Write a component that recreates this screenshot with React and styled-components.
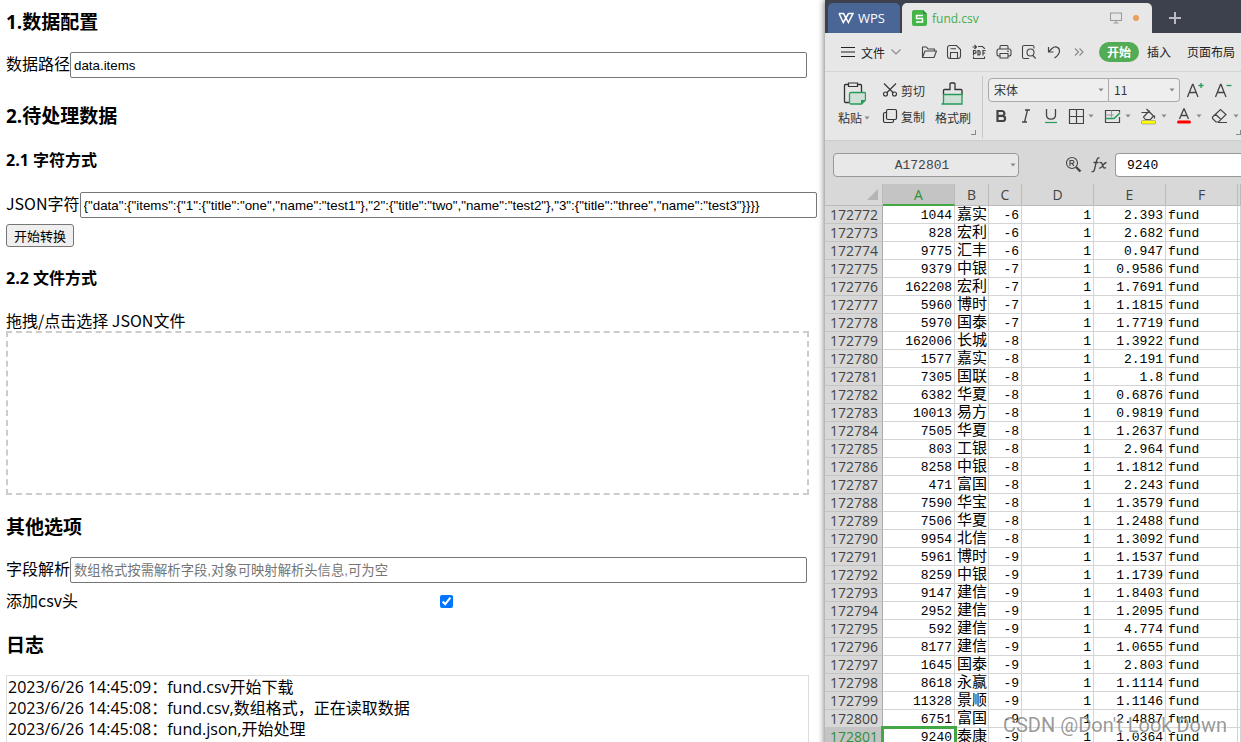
import styled, { createGlobalStyle } from 'styled-components';

const GlobalStyle = createGlobalStyle`
    * {
        box-sizing: border-box;
    }
    body {
        margin: 0;
        background: #fff;
        color: #000;
        font-family: "Noto Sans CJK SC", "Open Sans", sans-serif;
    }
    button, select {
        font: inherit;
        color: inherit;
    }
`;

const Page = styled.div`
    display: grid;
    grid-template-columns: minmax(0, 1fr) 416px;
    height: 100vh;
    overflow: hidden;
`;

/* ---------- converter form ---------- */

const Converter = styled.main`
    display: flex;
    flex-direction: column;
    align-items: flex-start;
    padding: 10px 0 0 6px;
    font-size: 16px;
    line-height: 21px;
    min-width: 0;
`;

const Section = styled.h3`
    margin: ${({ $first }) => ($first ? '0' : '20px')} 0 17px;
    font-family: "Open Sans", "Noto Sans CJK SC", sans-serif;
    font-size: 19px;
    line-height: 25px;
    font-weight: 700;
`;

const SubSection = styled.h4`
    margin: 21px 0;
    font-family: "Open Sans", "Noto Sans CJK SC", sans-serif;
    font-size: 16px;
    line-height: 21px;
    font-weight: 700;

    ${Section} + & {
        margin-top: 4px;
    }
`;

const Field = styled.div`
    display: flex;
    align-items: flex-start;
    width: 100%;
    height: ${({ $short }) => ($short ? '24px' : '26px')};
    margin-bottom: ${({ $short }) => ($short ? '0' : '6px')};
    line-height: 23px;
    white-space: nowrap;
`;

const TextInput = styled.input`
    flex: none;
    width: 90%;
    height: 26px;
    padding: 1px 3px;
    border: 1px solid #767676;
    border-radius: 2px;
    background: #fff;
    font-family: "Liberation Sans", "Noto Sans CJK SC", sans-serif;

    &::placeholder {
        color: #757575;
    }
`;

const CheckInput = styled.input`
    flex: none;
    align-self: center;
    width: 90%;
    height: 13px;
    margin: 0;
    accent-color: #0075ff;
`;

const ConvertButton = styled.button`
    height: 23px;
    padding: 0 7px;
    border: 1px solid #767676;
    border-radius: 3px;
    background: #efefef;
    font-size: 13px;
    line-height: 20px;
`;

const DropZone = styled.div`
    width: 98%;
    height: 164px;
    border: 2px dashed #ccc;
`;

const FileInput = styled.input`
    display: block;
    width: 100%;
    height: 100%;
    opacity: 0;
`;

const Log = styled.div`
    width: 98%;
    min-height: 200px;
    padding: 1px;
    border: 1px solid #ddd;
    font-family: "Open Sans", "Noto Sans CJK SC", sans-serif;
`;

/* ---------- spreadsheet window ---------- */

const Window = styled.section`
    display: flex;
    flex-direction: column;
    background: #d8d8d8;
    box-shadow: -1px 0 6px rgba(0, 0, 0, 0.5);
    font-size: 12px;
    color: #333;
    min-width: 0;
`;

const TitleBar = styled.header`
    display: flex;
    flex: none;
    gap: 2px;
    height: 33px;
    padding: 3px 0 0 3px;
    background: #3d404d;
`;

const AppTab = styled.button`
    display: flex;
    align-items: center;
    gap: 4px;
    width: 72px;
    padding: 0 0 0 10px;
    border: 0;
    border-radius: 5px 5px 0 0;
    background: #4a6697;
    color: #fff;
    font-family: "Open Sans", sans-serif;
    font-size: 13px;
`;

const FileTab = styled.div`
    display: flex;
    align-items: center;
    gap: 5px;
    width: 250px;
    padding: 0 13px 0 10px;
    border-radius: 5px 5px 0 0;
    background: #e7e7e7;
    color: #3fae49;
    font-family: "Open Sans", sans-serif;
    font-size: 12px;
`;

const FileName = styled.span`
    flex: 1;
`;

const UnsavedDot = styled.span`
    width: 6px;
    height: 6px;
    margin-left: 6px;
    border-radius: 50%;
    background: #e8a05a;
`;

const IconButton = styled.button`
    display: flex;
    flex: none;
    align-items: center;
    justify-content: center;
    gap: 4px;
    width: ${({ $width }) => $width || 25}px;
    height: 24px;
    padding: 0;
    border: 0;
    background: none;
    color: #444;
`;

const NewTab = styled(IconButton)`
    height: 30px;
    color: #b9bbc2;
`;

const MenuBar = styled.nav`
    display: flex;
    flex: none;
    align-items: center;
    height: 39px;
    padding-left: 16px;
    border-bottom: 1px solid #d4d4d4;
    background: #e7e7e7;
    overflow: hidden;
`;

const MenuButton = styled.button`
    display: flex;
    flex: none;
    align-items: center;
    gap: 6px;
    padding: 0;
    border: 0;
    background: none;
    color: #222;
    white-space: nowrap;
`;

const MenuDivider = styled.span`
    width: 1px;
    height: 24px;
    margin: 0 5px 0 10px;
    background: #bbb;
`;

const MenuTabs = styled.div`
    display: flex;
    flex: none;
    align-items: center;
    gap: 8px;
    margin-left: 8px;
`;

const MenuTab = styled.button`
    height: 20px;
    padding: 0 8px;
    border: 0;
    border-radius: 10px;
    background: ${({ $active }) => ($active ? '#52ab55' : 'none')};
    color: ${({ $active }) => ($active ? '#fff' : '#222')};
    font-weight: ${({ $active }) => ($active ? 700 : 400)};
    line-height: 20px;
    white-space: nowrap;

    & + & {
        padding: 0 8px 0 0;
    }
`;

const Ribbon = styled.div`
    display: flex;
    flex: none;
    height: 69px;
    background: #e7e7e7;
    border-bottom: 1px solid #ccc;
    overflow: hidden;
`;

const Clipboard = styled.div`
    display: flex;
    flex: none;
    align-items: flex-start;
    width: 158px;
    margin: 4px 0 2px;
    padding: 5px 0 0 13px;
    border-right: 1px solid #c8c8c8;
`;

const BigTool = styled.button`
    display: flex;
    flex-direction: column;
    align-items: center;
    gap: 4px;
    padding: 0;
    border: 0;
    background: none;
    color: #333;
    line-height: 18px;
    white-space: nowrap;
`;

const ToolLabel = styled.span`
    display: flex;
    align-items: center;
    gap: 2px;
`;

const SmallTools = styled.div`
    display: flex;
    flex-direction: column;
    gap: 8px;
    margin: 0 10px 0 12px;
`;

const SmallTool = styled.button`
    display: flex;
    align-items: center;
    gap: 3px;
    height: 18px;
    padding: 0;
    border: 0;
    background: none;
    color: #333;
    white-space: nowrap;
`;

const Corner = styled.span`
    flex: none;
    align-self: flex-end;
    width: 5px;
    height: 5px;
    margin-bottom: 3px;
    border: solid #888;
    border-width: 0 1px 1px 0;
`;

const FontTools = styled.div`
    display: flex;
    flex: 1;
    flex-direction: column;
    gap: 2px;
    min-width: 0;
    padding: 6px 0 0 5px;
`;

const ToolRow = styled.div`
    display: flex;
    align-items: center;
`;

const Picker = styled.label`
    display: flex;
    flex: none;
    align-items: center;
    width: ${({ $width }) => $width}px;
    height: 24px;
    padding: 0 4px 0 3px;
    border: 1px solid #aaa;
    border-radius: ${({ $last }) => ($last ? '0 4px 4px 0' : '4px 0 0 4px')};
    background: #eee;

    & + & {
        border-left: 0;
    }
`;

const PickerSelect = styled.select`
    flex: 1;
    min-width: 0;
    border: 0;
    padding: 0 0 0 2px;
    appearance: none;
    background: none;
    line-height: 20px;
`;

const FormulaBar = styled.div`
    display: flex;
    flex: none;
    align-items: center;
    height: 43px;
    padding: 4px 0 0 8px;
`;

const NameBox = styled.label`
    display: flex;
    align-items: center;
    width: 186px;
    height: 24px;
    margin-right: 40px;
    padding-right: 2px;
    border: 1px solid #999;
    border-radius: 4px;
    background: #e8e8e8;
`;

const NameInput = styled.input`
    flex: 1;
    min-width: 0;
    border: 0;
    padding: 2px 0 0;
    background: none;
    color: #444;
    text-align: center;
    font-family: "Liberation Mono", monospace;
    font-size: 13px;
`;

const FormulaInput = styled.input`
    flex: 1;
    min-width: 0;
    height: 24px;
    margin-left: 4px;
    padding: 2px 11px 0;
    border: 1px solid #999;
    border-right: 0;
    border-radius: 4px 0 0 4px;
    background: #fff;
    color: #000;
    font-family: "Liberation Mono", monospace;
    font-size: 13px;
`;

const Sheet = styled.table`
    width: 100%;
    table-layout: fixed;
    border-collapse: separate;
    border-spacing: 0;
    background: #fff;
    color: #000;
`;

const Col = styled.col`
    width: ${({ $width }) => $width};
`;

const ColumnHead = styled.th`
    height: 22px;
    padding: 0;
    border-right: 1px solid #bbb;
    border-bottom: ${({ $active }) => ($active ? '2px solid #43a843' : '1px solid #bbb')};
    background: ${({ $active }) => ($active ? '#c4c4c4' : '#d8d8d8')};
    color: ${({ $active }) => ($active ? '#2f8f3a' : '#444')};
    font-family: "Open Sans", sans-serif;
    font-size: 14px;
    font-weight: 400;
    line-height: 19px;
`;

const SelectAll = styled(ColumnHead)`
    text-align: right;
    line-height: 0;
    padding-right: 4px;
`;

const RowHead = styled.th`
    height: 18px;
    padding: 0 4px 1px 0;
    border-right: 1px solid #aaa;
    border-bottom: 1px solid #c4c4c4;
    background: ${({ $active }) => ($active ? '#c4c4c4' : '#d8d8d8')};
    color: ${({ $active }) => ($active ? '#2f8f3a' : '#444')};
    font-family: "Open Sans", sans-serif;
    font-size: 14px;
    font-weight: 400;
    line-height: 15px;
    text-align: right;
`;

const Cell = styled.td`
    height: 18px;
    padding: 2px 2px 0;
    border-right: 1px solid #d4d4d4;
    border-bottom: 1px solid #d4d4d4;
    font-family: "Liberation Mono", "Noto Sans CJK SC", monospace;
    font-size: ${({ $name }) => ($name ? '15px' : '13px')};
    line-height: 15px;
    text-align: ${({ $left }) => ($left ? 'left' : 'right')};
    white-space: nowrap;
    outline: ${({ $active }) => ($active ? '3px solid #43a843' : 'none')};
    outline-offset: -1px;
`;

const Watermark = styled.div`
    position: absolute;
    right: 14px;
    bottom: 4px;
    color: rgba(120, 120, 120, 0.75);
    font-family: Roboto, sans-serif;
    font-size: 20px;
    line-height: 26px;
    text-shadow: 1px 1px 0 rgba(255, 255, 255, 0.7);
    white-space: nowrap;
    pointer-events: none;
`;

/* ---------- icons ---------- */

function Icon({ w = 16, h = 16, children }) {
    return (
        <svg width={w} height={h} viewBox={`0 0 ${w} ${h}`} fill="none" stroke="currentColor" strokeWidth="1.1" aria-hidden="true">
            {children}
        </svg>
    );
}

const Caret = () => (
    <Icon w={6} h={4}><path d="M0.5 0.5h5L3 3.5z" fill="#888" stroke="none" /></Icon>
);

const WpsLogo = () => (
    <Icon w={16} h={12}>
        <path d="M1 1.5h4.5L8 6.5M1 1.5l4.3 9L10.5 1.5M5.6 1.5l4.8 9L15 1.5h-4.5M10.4 1.5H15" strokeWidth="1.5" />
    </Icon>
);

const SheetLogo = () => (
    <Icon w={15} h={16}>
        <path d="M2 0h9l4 4v10a2 2 0 0 1-2 2H2a2 2 0 0 1-2-2V2a2 2 0 0 1 2-2z" fill="#45b549" stroke="none" />
        <path d="M11 0l4 4h-4z" fill="#2f9438" stroke="none" />
        <path d="M11 5.5H4.5v3h6v3.500H4" stroke="#fff" strokeWidth="1.5" />
    </Icon>
);

const Monitor = () => (
    <Icon w={12} h={12}><path d="M.5 1h11v7.500H.5zM6 8.500v2.500M3.500 11h5" stroke="#999" /></Icon>
);

const Plus = () => (
    <Icon w={12} h={12}><path d="M6 0v12M0 6h12" strokeWidth="2" /></Icon>
);

const Burger = () => (
    <Icon w={14} h={10}><path d="M0 .5h14M0 5h14M0 9.500h14" /></Icon>
);

const Chevron = () => (
    <Icon w={10} h={6}><path d="M.5.5L5 5 9.500.5" stroke="#888" /></Icon>
);

const FolderIcon = () => (
    <Icon><path d="M1.500 13.500V3h4l1.500 2h6.500v2M1.500 13.500l2.500-6.500h11.500l-2.500 6.500z" strokeLinejoin="round" /></Icon>
);

const SaveIcon = () => (
    <Icon><path d="M4 1.500h6.500l4 4V12a2.500 2.500 0 0 1-2.500 2.500H4A2.500 2.500 0 0 1 1.500 12V4A2.500 2.500 0 0 1 4 1.500zM4.500 14.500v-6h7v6M4.500 4.800h5.500" /></Icon>
);

const PdfIcon = () => (
    <Icon>
        <path d="M1.500 3H5M3.500 1L5.500 3l-2 2M7 2.500h4.500l2 2V5M2.500 12.500v2h11v-2" />
        <path d="M2.500 11.500V6.500h1.200a1.200 1.200 0 0 1 0 2.800H2.500M7 6.500v4.500h.6c2.100 0 2.100-4.500 0-4.500zM12 11.500V6.500h2.700M12 9h2.300" strokeWidth="1.200" />
    </Icon>
);

const PrintIcon = () => (
    <Icon><path d="M4 5V2.500a1 1 0 0 1 1-1h6a1 1 0 0 1 1 1V5M4 12H3a2 2 0 0 1-2-2V7a2 2 0 0 1 2-2h10a2 2 0 0 1 2 2v3a2 2 0 0 1-2 2h-1M4 9.500h8v4.500H4zM11 7.200h2" /></Icon>
);

const PreviewIcon = () => (
    <Icon><path d="M8 14.500H3a1.500 1.500 0 0 1-1.500-1.500V3A1.500 1.500 0 0 1 3 1.500h8.500A1.500 1.500 0 0 1 13 3v1.500M11.700 11.500l3 3" /><circle cx="9.500" cy="8.500" r="3.500" /></Icon>
);

const UndoIcon = () => (
    <Icon><path d="M2.500 3v5h5M2.500 8L6 4.500c3-3 7.500-1.500 7.500 2.500 0 3-2 5-5 7" strokeWidth="1.2" /></Icon>
);

const MoreIcon = () => (
    <Icon w={10} h={8}><path d="M1 .5L4.500 4 1 7.500M5.500.5L9 4 5.500 7.500" stroke="#888" /></Icon>
);

const PasteIcon = () => (
    <Icon w={24} h={24}>
        <path d="M6.500 3.500H3.500a1 1 0 0 0-1 1v16a1 1 0 0 0 1 1H7M15.500 3.500h3a1 1 0 0 1 1 1V11" stroke="#333" strokeWidth="1.300" />
        <path d="M6.500 2h9v3.500h-9z" stroke="#333" strokeWidth="1.2" />
        <path d="M9 11.500h13.500a1 1 0 0 1 1 1V19l-4 4H9a1.500 1.500 0 0 1-1.500-1.500V13A1.500 1.500 0 0 1 9 11.500z" fill="#cfe0d6" stroke="#279b58" strokeWidth="1.3" />
        <path d="M19 23v-4h4z" fill="#279b58" stroke="none" />
    </Icon>
);

const BrushIcon = () => (
    <Icon w={24} h={24}>
        <path d="M2.500 14V9.500a1 1 0 0 1 1-1h5.500V3a1 1 0 0 1 1-1h3a1 1 0 0 1 1 1v5.500h6a1 1 0 0 1 1 1V14" stroke="#333" strokeWidth="1.3" />
        <path d="M2.500 13.500h18.500v9.500H.5c1.500 0 2-1 2-2z" fill="#cfe0d6" stroke="#279b58" strokeWidth="1.300" />
    </Icon>
);

const ScissorsIcon = () => (
    <Icon w={16} h={16}><path d="M2 1.500l9.500 9.500M14 1.500L4.500 11" /><circle cx="3.500" cy="12" r="2" /><circle cx="12.500" cy="12" r="2" /></Icon>
);

const CopyIcon = () => (
    <Icon w={16} h={16}><path d="M6 1.500h7a1.500 1.500 0 0 1 1.500 1.500v7a1.500 1.500 0 0 1-1.500 1.500H6A1.500 1.500 0 0 1 4.500 10V3A1.500 1.500 0 0 1 6 1.500zM4.500 4.500H3A1.500 1.500 0 0 0 1.500 6v7A1.500 1.500 0 0 0 3 14.500h7a1.500 1.500 0 0 0 1.500-1.500v-1.500" strokeWidth="1.2" /></Icon>
);

const FontGrow = ({ plus }) => (
    <Icon w={18} h={16}>
        <path d="M1.500 15L6.500 2.500h.5L12 15M3.200 10.500h7" strokeWidth="1.3" />
        <path d={plus ? 'M12.500 3.500h5M15 1v5' : 'M12.500 3.500h5'} stroke="#279b58" strokeWidth="1.300" />
    </Icon>
);

const BoldIcon = () => (
    <Icon w={12} h={14}><path d="M2.500 2h4.500a2.400 2.400 0 0 1 0 4.800H2.500zM2.500 6.800h5a2.600 2.600 0 0 1 0 5.200h-5z" strokeWidth="2.2" /></Icon>
);

const ItalicIcon = () => (
    <Icon w={12} h={14}><path d="M5 1h5M2 13h5M7.500 1L4.500 13" strokeWidth="1.300" /></Icon>
);

const UnderlineIcon = () => (
    <Icon w={14} h={16}><path d="M2.500 1v6c0 5.500 9 5.500 9 0V1" strokeWidth="1.3" /><path d="M1 14.500h12" stroke="#279b58" strokeWidth="1.2" /></Icon>
);

const BorderIcon = () => (
    <Icon><path d="M1.500 1.500h14v14h-14zM8.500 1.500v14M1.500 8.500h14" strokeWidth="1.2" /></Icon>
);

const StyleIcon = () => (
    <Icon w={17}>
        <path d="M15.500 4.500v-2h-14v12h14V9M1.500 2.500v6" strokeWidth="1.200" />
        <path d="M1.500 7h8M7.500 2.500v7" stroke="#999" />
        <path d="M1 10.500h9L16 5" stroke="#279b58" strokeWidth="1.600" />
    </Icon>
);

const FillIcon = () => (
    <Icon w={17} h={17}>
        <path d="M1.500 4.500h8.500M6.500 1L13.500 8l-3 3.500h-5L3.500 9l6-6.500M14.500 7.500v3" strokeWidth="1.200" />
        <rect x="1.500" y="12.500" width="14" height="3.500" rx="1" fill="#ff0" stroke="#888" strokeWidth=".6" />
    </Icon>
);

const ColorIcon = () => (
    <Icon w={16} h={16}>
        <path d="M3.500 11L7.800 1h.4l4.300 10M5 7.500h6" strokeWidth="1.300" />
        <path d="M2.500 14h11" stroke="#f00" strokeWidth="3" strokeLinecap="round" />
    </Icon>
);

const EraserIcon = () => (
    <Icon w={18} h={16}><path d="M1.500 9L9.500 1.500l5.500 5L7.500 14H5L1.500 10.500zM4.500 6.200L10 11.500M7 14.500h9" strokeWidth="1.200" /></Icon>
);

const FindIcon = () => (
    <Icon w={17} h={17}><circle cx="7" cy="7" r="5.500" /><path d="M11 11l4.500 4.500" strokeWidth="2.400" /><path d="M5 10V4.500h2.500a1.300 1.300 0 0 1 0 2.800H5M7 7.300L9 10" /></Icon>
);

const FxIcon = () => (
    <Icon w={18} h={18}><path d="M9.500 2C7.500 1.500 7 3 6.500 5L4.500 13.500c-.5 2-1.500 2.500-3 2M3.500 6.500h5M9.500 7c2-1.500 2.500 0 3 2s1 4 3.500 2.500M16.500 6.500c-2 0-3 2-4 3.500s-2 2.500-3.500 2" strokeWidth="1.300" /></Icon>
);

const Triangle = () => (
    <Icon w={11} h={11}><path d="M11 0v11H0z" fill="#b4b4b4" stroke="none" /></Icon>
);

/* ---------- data ---------- */

const logs = [
    '2023/6/26 14:45:09：fund.csv开始下载',
    '2023/6/26 14:45:08：fund.csv,数组格式，正在读取数据',
    '2023/6/26 14:45:08：fund.json,开始处理',
];

const firstRow = 172772;
const activeRow = 172801;

const rows = [
    ['1044', '嘉实', '-6', '2.393'],
    ['828', '宏利', '-6', '2.682'],
    ['9775', '汇丰', '-6', '0.947'],
    ['9379', '中银', '-7', '0.9586'],
    ['162208', '宏利', '-7', '1.7691'],
    ['5960', '博时', '-7', '1.1815'],
    ['5970', '国泰', '-7', '1.7719'],
    ['162006', '长城', '-8', '1.3922'],
    ['1577', '嘉实', '-8', '2.191'],
    ['7305', '国联', '-8', '1.8'],
    ['6382', '华夏', '-8', '0.6876'],
    ['10013', '易方', '-8', '0.9819'],
    ['7505', '华夏', '-8', '1.2637'],
    ['803', '工银', '-8', '2.964'],
    ['8258', '中银', '-8', '1.1812'],
    ['471', '富国', '-8', '2.243'],
    ['7590', '华宝', '-8', '1.3579'],
    ['7506', '华夏', '-8', '1.2488'],
    ['9954', '北信', '-8', '1.3092'],
    ['5961', '博时', '-9', '1.1537'],
    ['8259', '中银', '-9', '1.1739'],
    ['9147', '建信', '-9', '1.8403'],
    ['2952', '建信', '-9', '1.2095'],
    ['592', '建信', '-9', '4.774'],
    ['8177', '建信', '-9', '1.0655'],
    ['1645', '国泰', '-9', '2.803'],
    ['8618', '永赢', '-9', '1.1114'],
    ['11328', '景顺', '-9', '1.1146'],
    ['6751', '富国', '-9', '2.4887'],
    ['9240', '泰康', '-9', '1.0364'],
];

const fileTools = [
    ['打开', FolderIcon],
    ['保存', SaveIcon],
    ['输出为PDF', PdfIcon],
    ['打印', PrintIcon],
    ['打印预览', PreviewIcon],
    ['撤销', UndoIcon],
    ['更多', MoreIcon],
];

const formatTools = [
    ['加粗', BoldIcon],
    ['倾斜', ItalicIcon],
    ['下划线', UnderlineIcon],
    ['边框', BorderIcon, true],
    ['表格样式', StyleIcon, true],
    ['填充颜色', FillIcon, true],
    ['字体颜色', ColorIcon, true],
    ['清除', EraserIcon, true],
];

function ConverterForm() {
    return (
        <Converter>
            <Section $first>1.数据配置</Section>
            <Field>
                <label htmlFor="path">数据路径</label>
                <TextInput id="path" defaultValue="data.items" />
            </Field>

            <Section>2.待处理数据</Section>
            <SubSection>2.1 字符方式</SubSection>
            <Field>
                <label htmlFor="json">JSON字符</label>
                <TextInput
                    id="json"
                    defaultValue='{"data":{"items":{"1":{"title":"one","name":"test1"},"2":{"title":"two","name":"test2"},"3":{"title":"three","name":"test3"}}}}'
                />
            </Field>
            <ConvertButton type="button">开始转换</ConvertButton>

            <SubSection>2.2 文件方式</SubSection>
            <label htmlFor="file">拖拽/点击选择 JSON文件</label>
            <DropZone>
                <FileInput id="file" type="file" accept=".json" />
            </DropZone>

            <Section>其他选项</Section>
            <Field>
                <label htmlFor="fields">字段解析</label>
                <TextInput id="fields" placeholder="数组格式按需解析字段,对象可映射解析头信息,可为空" />
            </Field>
            <Field $short>
                <label htmlFor="header">添加csv头</label>
                <CheckInput id="header" type="checkbox" defaultChecked />
            </Field>

            <Section>日志</Section>
            <Log>
                {logs.map((line) => <div key={line}>{line}</div>)}
            </Log>
        </Converter>
    );
}

function SheetTable() {
    return (
        <Sheet>
            <colgroup>
                <Col $width="58px" />
                <Col $width="72px" />
                <Col $width="34px" />
                <Col $width="33px" />
                <Col $width="72px" />
                <Col $width="72px" />
                <Col $width="72px" />
                <Col $width="auto" />
            </colgroup>
            <thead>
                <tr>
                    <SelectAll><Triangle /></SelectAll>
                    {['A', 'B', 'C', 'D', 'E', 'F', ''].map((name) => (
                        <ColumnHead key={name} $active={name === 'A'}>{name}</ColumnHead>
                    ))}
                </tr>
            </thead>
            <tbody>
                {rows.map(([code, name, rank, value], i) => {
                    const active = firstRow + i === activeRow;
                    return (
                        <tr key={code}>
                            <RowHead $active={active}>{firstRow + i}</RowHead>
                            <Cell $active={active}>{code}</Cell>
                            <Cell $left $name>{name}</Cell>
                            <Cell>{rank}</Cell>
                            <Cell>1</Cell>
                            <Cell>{value}</Cell>
                            <Cell $left>fund</Cell>
                            <Cell />
                        </tr>
                    );
                })}
            </tbody>
        </Sheet>
    );
}

function SpreadsheetWindow() {
    return (
        <Window>
            <TitleBar>
                <AppTab type="button"><WpsLogo />WPS</AppTab>
                <FileTab>
                    <SheetLogo />
                    <FileName>fund.csv</FileName>
                    <Monitor />
                    <UnsavedDot />
                </FileTab>
                <NewTab $width={42} aria-label="新建"><Plus /></NewTab>
            </TitleBar>

            <MenuBar>
                <MenuButton type="button"><Burger />文件<Chevron /></MenuButton>
                <MenuDivider />
                {fileTools.map(([label, Glyph]) => (
                    <IconButton key={label} aria-label={label}><Glyph /></IconButton>
                ))}
                <MenuTabs>
                    <MenuTab $active>开始</MenuTab>
                    <MenuTab>插入</MenuTab>
                    <MenuTab>页面布局</MenuTab>
                </MenuTabs>
            </MenuBar>

            <Ribbon>
                <Clipboard>
                    <BigTool type="button">
                        <PasteIcon />
                        <ToolLabel>粘贴<Caret /></ToolLabel>
                    </BigTool>
                    <SmallTools>
                        <SmallTool type="button"><ScissorsIcon />剪切</SmallTool>
                        <SmallTool type="button"><CopyIcon />复制</SmallTool>
                    </SmallTools>
                    <BigTool type="button">
                        <BrushIcon />
                        <ToolLabel>格式刷</ToolLabel>
                    </BigTool>
                    <Corner />
                </Clipboard>
                <FontTools>
                    <ToolRow>
                        <Picker $width={121}>
                            <PickerSelect aria-label="字体"><option>宋体</option></PickerSelect>
                            <Caret />
                        </Picker>
                        <Picker $width={71} $last>
                            <PickerSelect aria-label="字号"><option>11</option></PickerSelect>
                            <Caret />
                        </Picker>
                        <IconButton $width={30} aria-label="增大字号"><FontGrow plus /></IconButton>
                        <IconButton $width={25} aria-label="减小字号"><FontGrow /></IconButton>
                    </ToolRow>
                    <ToolRow>
                        {formatTools.map(([label, Glyph, menu]) => (
                            <IconButton key={label} $width={menu ? 36 : 25} aria-label={label}>
                                <Glyph />
                                {menu && <Caret />}
                            </IconButton>
                        ))}
                    </ToolRow>
                    <Corner />
                </FontTools>
            </Ribbon>

            <FormulaBar>
                <NameBox>
                    <NameInput aria-label="名称框" defaultValue="A172801" />
                    <Caret />
                </NameBox>
                <IconButton $width={28} aria-label="查找"><FindIcon /></IconButton>
                <IconButton $width={24} aria-label="插入函数"><FxIcon /></IconButton>
                <FormulaInput aria-label="编辑栏" defaultValue="9240" />
            </FormulaBar>

            <SheetTable />
        </Window>
    );
}

function App() {
    return (
        <>
            <GlobalStyle />
            <Page>
                <ConverterForm />
                <SpreadsheetWindow />
            </Page>
            <Watermark>CSDN @Don't Look Down</Watermark>
        </>
    );
}

export default App;
